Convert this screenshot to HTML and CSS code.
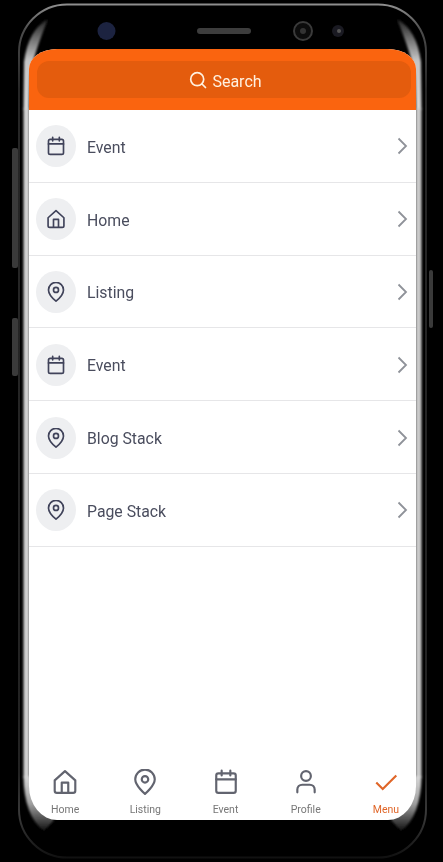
FILE: index.html
```html
<!DOCTYPE html>
<html lang="en">
<head>
  <meta charset="UTF-8">
  <title>Menu</title>
  <link rel="stylesheet" href="styles.css">
</head>
<body>
  <div class="phone">
    <svg class="phone__body" width="443" height="862" viewBox="0 0 443 862">
      <defs>
        <linearGradient id="rim" x1="0" y1="0" x2="0" y2="1">
          <stop offset="0" stop-color="#8e8e8e"/>
          <stop offset="0.03" stop-color="#4c4c4c"/>
          <stop offset="0.1" stop-color="#262626"/>
          <stop offset="0.9" stop-color="#222"/>
          <stop offset="0.95" stop-color="#3a3a3a"/>
          <stop offset="1" stop-color="#111"/>
        </linearGradient>
        <linearGradient id="glareTop" x1="0" y1="0" x2="0" y2="1">
          <stop offset="0" stop-color="#222"/>
          <stop offset="0.45" stop-color="#c4c4c4"/>
          <stop offset="1" stop-color="#d8d8d8"/>
        </linearGradient>
        <linearGradient id="glareBottom" x1="0" y1="0" x2="0" y2="1">
          <stop offset="0" stop-color="#d8d8d8"/>
          <stop offset="0.5" stop-color="#a0a0a0"/>
          <stop offset="1" stop-color="#111"/>
        </linearGradient>
        <filter id="soft"><feGaussianBlur stdDeviation="0.900"/></filter>
      </defs>
      <rect x="12" y="148" width="6" height="120" rx="2" fill="#3a3a3a"/>
      <rect x="12" y="318" width="6" height="58" rx="2" fill="#3a3a3a"/>
      <rect x="429" y="270" width="4" height="58" rx="2" fill="#3a3a3a"/>
      <rect x="19" y="4.500" width="407" height="853" rx="48" fill="#000" stroke="url(#rim)" stroke-width="2"/>
      <g filter="url(#soft)">
        <path d="M48 19 Q28 30 24 62 L23.500 110 L29 110 L30 76 Q33 56 48 19 Z" fill="url(#glareTop)"/>
        <path d="M397 19 Q417 30 421 62 L421.500 110 L416 110 L415 76 Q412 56 397 19 Z" fill="url(#glareTop)"/>
        <rect x="23.500" y="108" width="6" height="670" fill="#d2d2d2"/>
        <rect x="415.500" y="108" width="6" height="670" fill="#cacaca"/>
        <path d="M23.500 776 L30 776 Q34 806 54 820 L44 831 Q24 816 23.500 776 Z" fill="url(#glareBottom)"/>
        <path d="M421.500 776 L415 776 Q411 806 391 820 L401 831 Q421 816 421.500 776 Z" fill="url(#glareBottom)"/>
      </g>
      <circle cx="106.500" cy="31" r="9" fill="#1c2340"/>
      <rect x="197" y="28" width="54" height="6" rx="3" fill="#3d3d3d"/>
      <circle cx="303" cy="31" r="9" fill="#0c0c0c" stroke="#3a3a3a" stroke-width="2"/>
      <circle cx="303" cy="31" r="3" fill="#333"/>
      <circle cx="338" cy="31" r="6" fill="#1a1a22"/>
      <circle cx="339" cy="31" r="2" fill="#555"/>
    </svg>
    <div class="screen">
      <header class="top">
        <div class="search">
          <svg class="search__icon" width="18" height="18" viewBox="0 0 18 18" fill="none" stroke="#fff1e0" stroke-width="1.700" stroke-linecap="round"><circle cx="8.200" cy="8.200" r="6.500"/><path d="M13 13l3.500 3.500"/></svg>
          <span>Search</span>
        </div>
      </header>
      <ul class="menu">
        <li class="menu__row">
          <span class="menu__icon"><svg width="20" height="20" viewBox="0 0 24 24"><use href="#i-cal"/></svg></span>
          <span class="menu__label">Event</span>
          <svg class="menu__arrow" width="12" height="18" viewBox="0 0 12 18"><use href="#i-arrow"/></svg>
        </li>
        <li class="menu__row">
          <span class="menu__icon"><svg width="20" height="20" viewBox="0 0 24 24"><use href="#i-home"/></svg></span>
          <span class="menu__label">Home</span>
          <svg class="menu__arrow" width="12" height="18" viewBox="0 0 12 18"><use href="#i-arrow"/></svg>
        </li>
        <li class="menu__row">
          <span class="menu__icon"><svg width="20" height="20" viewBox="0 0 24 24"><use href="#i-pin"/></svg></span>
          <span class="menu__label">Listing</span>
          <svg class="menu__arrow" width="12" height="18" viewBox="0 0 12 18"><use href="#i-arrow"/></svg>
        </li>
        <li class="menu__row">
          <span class="menu__icon"><svg width="20" height="20" viewBox="0 0 24 24"><use href="#i-cal"/></svg></span>
          <span class="menu__label">Event</span>
          <svg class="menu__arrow" width="12" height="18" viewBox="0 0 12 18"><use href="#i-arrow"/></svg>
        </li>
        <li class="menu__row">
          <span class="menu__icon"><svg width="20" height="20" viewBox="0 0 24 24"><use href="#i-pin"/></svg></span>
          <span class="menu__label">Blog Stack</span>
          <svg class="menu__arrow" width="12" height="18" viewBox="0 0 12 18"><use href="#i-arrow"/></svg>
        </li>
        <li class="menu__row">
          <span class="menu__icon"><svg width="20" height="20" viewBox="0 0 24 24"><use href="#i-pin"/></svg></span>
          <span class="menu__label">Page Stack</span>
          <svg class="menu__arrow" width="12" height="18" viewBox="0 0 12 18"><use href="#i-arrow"/></svg>
        </li>
      </ul>
      <nav class="tabs">
        <div class="tabs__item"><svg width="26" height="26" viewBox="0 0 24 24"><use href="#i-home"/></svg><span>Home</span></div>
        <div class="tabs__item"><svg width="26" height="26" viewBox="0 0 24 24"><use href="#i-pin"/></svg><span>Listing</span></div>
        <div class="tabs__item"><svg width="26" height="26" viewBox="0 0 24 24"><use href="#i-cal"/></svg><span>Event</span></div>
        <div class="tabs__item"><svg width="26" height="26" viewBox="0 0 24 24"><use href="#i-user"/></svg><span>Profile</span></div>
        <div class="tabs__item tabs__item--on"><svg width="26" height="26" viewBox="0 0 24 24"><path d="M3 12.500l6 6L21.500 6" fill="none" stroke="#e0672a" stroke-width="2"/></svg><span>Menu</span></div>
      </nav>
    </div>
  </div>

  <svg class="defs" width="0" height="0">
    <defs>
      <g id="i-cal" fill="none" stroke="currentColor" stroke-width="2" stroke-linejoin="round" stroke-linecap="round">
        <rect x="3" y="4" width="18" height="18" rx="2"/><path d="M3 9.500h18M8 1.500V6M16 1.500V6"/>
      </g>
      <g id="i-home" fill="none" stroke="currentColor" stroke-width="2" stroke-linejoin="round">
        <path d="M2.500 10.500L12 2l9.500 8.500V20a2 2 0 0 1-2 2h-15a2 2 0 0 1-2-2z"/><path d="M9 22V12.500h6V22"/>
      </g>
      <g id="i-pin" fill="none" stroke="currentColor" stroke-width="2" stroke-linejoin="round">
        <path d="M12 23s-9-7.500-9-13.500a9 9 0 0 1 18 0C21 15.500 12 23 12 23z"/><circle cx="12" cy="9.500" r="3"/>
      </g>
      <g id="i-user" fill="none" stroke="currentColor" stroke-width="2" stroke-linecap="round">
        <circle cx="12" cy="6.500" r="4.500"/><path d="M4 21.500V19a4.500 4.500 0 0 1 4.500-4.500h7A4.500 4.500 0 0 1 20 19v2.500"/>
      </g>
      <path id="i-arrow" d="M2.500 1.500L10 9l-7.500 7.500" fill="none" stroke="#8f9299" stroke-width="1.800"/>
    </defs>
  </svg>
</body>
</html>
```
FILE: styles.css
```css
*,
*::before,
*::after {
  box-sizing: border-box;
}
body{
  margin: 0;
  background-color: #000;
  font-family: Roboto, 'Liberation Sans', sans-serif;
}
.phone{
  position: relative;
  width: 443px;
  height: 862px;
  overflow: hidden;
  padding: 49px 27px 0 29px;
  filter: blur(0.35px);
}
.phone__body{
  position: absolute;
  top: 0;
  left: 0;
}
.defs{
  position: absolute;
}
.screen{
  position: relative;
  display: flex;
  flex-direction: column;
  height: 771px;
  background-color: #fff;
  border-radius: 28px 28px 28px 28px / 20px 20px 34px 34px;
  overflow: hidden;
}
.top{
  height: 61px;
  padding: 12px 5px 12px 8px;
  background-color: #fa640f;
}
.search{
  display: flex;
  align-items: center;
  justify-content: center;
  gap: 5px;
  height: 37px;
  padding: 3px 0 0 3px;
  border-radius: 12px;
  background-color: #e45c0d;
  color: #fff1e0;
  font-size: 16px;
}
.search__icon{
  margin-bottom: 3px;
}
.menu{
  margin: 0;
  padding: 0;
  list-style: none;
}
.menu__row{
  display: flex;
  align-items: center;
  height: 72.800px;
  padding: 1px 8px 0 7px;
  border-bottom: 1px solid #e6e6e8;
}
.menu__icon{
  display: flex;
  align-items: center;
  justify-content: center;
  width: 40px;
  height: 42px;
  border-radius: 50%;
  background-color: #eeeff1;
  color: #40435a;
}
.menu__label{
  flex: 1;
  margin: 2px 0 0 11px;
  color: #4a4d5e;
  font-size: 15.800px;
}
.tabs{
  display: flex;
  margin: auto -10px 0 -4px;
  padding: 0 0 4px;
}
.tabs__item{
  flex: 1;
  display: flex;
  flex-direction: column;
  align-items: center;
  color: #62646f;
  font-size: 10.500px;
}
.tabs__item span{
  margin-top: 8px;
  color: #777;
}
.tabs__item--on span{
  color: #e0672a;
}
```
